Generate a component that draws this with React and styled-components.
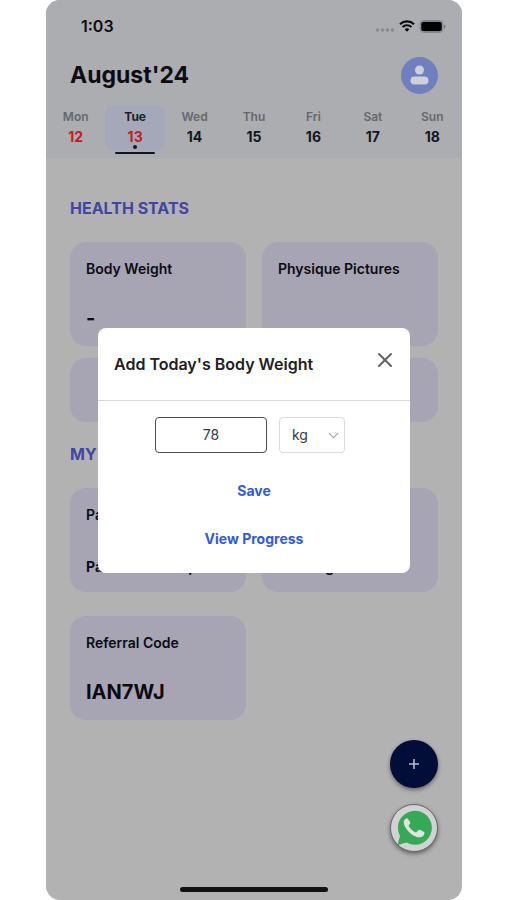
import React from "react";
import styled, { createGlobalStyle } from "styled-components";
import { X, ChevronDown } from "lucide-react";

const GlobalStyle = createGlobalStyle`
  *, *::before, *::after { box-sizing: border-box; }
  body { margin: 0; background: #fff; font-family: Inter, "Liberation Sans", sans-serif; color: #0b0b10; }
  h1, h2, h3, p { margin: 0; }
  button, input, select { font: inherit; }
`;

const Page = styled.div`
  min-height: 100vh;
  padding: 0 45px 0 46px;
  display: flex;
`;

const Phone = styled.div`
  position: relative;
  flex: 1;
  min-width: 0;
  display: flex;
  flex-direction: column;
  background: #b2b2b2;
  border-radius: 14px;
  overflow: hidden;
`;

const Header = styled.header`
  background: #abadb1;
  height: 158px;
`;

const StatusBar = styled.div`
  display: flex;
  align-items: center;
  justify-content: space-between;
  height: 52px;
  padding: 0 16px 0 35px;
`;

const Clock = styled.span`
  font-size: 16px;
  line-height: 20px;
  font-weight: 600;
`;

const StatusIcons = styled.div`
  display: flex;
  align-items: center;
  gap: 4px;
`;

const TitleRow = styled.div`
  display: flex;
  align-items: center;
  justify-content: space-between;
  height: 46px;
  padding: 0 24px;
`;

const Month = styled.h1`
  font-size: 23px;
  line-height: 32px;
  font-weight: 700;
`;

const Avatar = styled.button`
  width: 37px;
  height: 37px;
  padding: 0;
  border: 0;
  border-radius: 50%;
  background: #707fbe;
  svg { display: block; }
`;

const Week = styled.div`
  display: grid;
  grid-template-columns: repeat(7, 1fr);
  padding-top: 7px;
`;

const Day = styled.button`
  position: relative;
  height: 46px;
  padding: 2px 0 0;
  border: 0;
  border-radius: 8px;
  background: ${(p) => (p.$selected ? "#a5a8b8" : "transparent")};
  display: flex;
  flex-direction: column;
  align-items: center;
`;

const DayName = styled.span`
  font-size: 12px;
  line-height: 20px;
  font-weight: ${(p) => (p.$selected ? 700 : 600)};
  color: ${(p) => (p.$selected ? "#1d1e26" : "#66676c")};
`;

const DayNumber = styled.span`
  font-size: 14px;
  line-height: 20px;
  font-weight: 700;
  color: ${(p) => (p.$red ? "#bd2127" : "#15161b")};
`;

const TodayDot = styled.span`
  position: absolute;
  bottom: 2px;
  width: 4px;
  height: 4px;
  border-radius: 50%;
  background: #14151d;
`;

const Underline = styled.span`
  position: absolute;
  bottom: -3px;
  width: 40px;
  height: 2px;
  border-radius: 1px;
  background: #14151d;
`;

const Content = styled.main`
  flex: 1;
  padding: 38px 24px 180px;
`;

const SectionTitle = styled.h2`
  font-size: 16px;
  line-height: 24px;
  font-weight: 700;
  color: #4245a4;
`;

const Cards = styled.div`
  display: grid;
  grid-template-columns: 1fr 1fr;
  gap: ${(p) => p.$gap} 16px;
  margin: ${(p) => p.$margin};
`;

const Card = styled.section`
  height: ${(p) => (p.$short ? "64px" : "104px")};
  padding: 16px;
  border-radius: 16px;
  background: #a7a4b3;
  display: flex;
  flex-direction: column;
  justify-content: space-between;
`;

const CardTitle = styled.h3`
  font-size: 14px;
  line-height: 22px;
  font-weight: 600;
`;

const CardValue = styled.p`
  font-size: ${(p) => (p.$small ? "14px" : "20px")};
  line-height: ${(p) => (p.$small ? "18px" : "24px")};
  font-weight: 700;
`;

const Fabs = styled.div`
  position: absolute;
  right: 24px;
  bottom: 48px;
  display: flex;
  flex-direction: column;
  gap: 16px;
`;

const Fab = styled.button`
  width: 48px;
  height: 48px;
  padding: 0;
  display: grid;
  place-items: center;
  border-radius: 50%;
  border: ${(p) => (p.$light ? "1px solid #66666c" : "0")};
  background: ${(p) => (p.$light ? "#d2d2d4" : "#020d38")};
  box-shadow: 0 2px 4px rgba(0, 0, 0, 0.45);
`;

const HomeIndicator = styled.div`
  position: absolute;
  bottom: 8px;
  left: 50%;
  width: 148px;
  height: 5px;
  margin-left: -74px;
  border-radius: 3px;
  background: #111;
`;

const Overlay = styled.div`
  position: absolute;
  inset: 0;
  display: flex;
  align-items: center;
  justify-content: center;
`;

const Dialog = styled.form`
  width: 75%;
  background: #fff;
  border-radius: 8px;
`;

const DialogHeader = styled.div`
  display: flex;
  align-items: flex-start;
  justify-content: space-between;
  height: 73px;
  padding: 20px 13px 0 16px;
  border-bottom: 1px solid #d9d9dc;
`;

const DialogTitle = styled.h2`
  padding-top: 4px;
  font-size: 16px;
  line-height: 24px;
  font-weight: 600;
  color: #202024;
`;

const Close = styled.button`
  padding: 0;
  border: 0;
  background: none;
  color: #626266;
  svg { display: block; }
`;

const DialogBody = styled.div`
  display: flex;
  flex-direction: column;
  align-items: center;
  padding: 16px 16px 22px;
`;

const Fields = styled.div`
  display: flex;
  gap: 12px;
  padding-right: 8px;
  margin-bottom: 26px;
`;

const WeightInput = styled.input`
  width: 112px;
  height: 36px;
  border: 1px solid #4b4862;
  border-radius: 4px;
  background: #fff;
  text-align: center;
  font-size: 14px;
  color: #38383c;
  outline: none;
`;

const UnitBox = styled.div`
  position: relative;
  width: 66px;
  svg { position: absolute; right: 3px; top: 10px; pointer-events: none; color: #a5a5a8; }
`;

const UnitSelect = styled.select`
  appearance: none;
  width: 100%;
  height: 36px;
  padding: 0 12px;
  border: 1px solid #dadadd;
  border-radius: 4px;
  background: #fff;
  font-size: 14px;
  color: #38383c;
`;

const TextButton = styled.button`
  padding: 0;
  border: 0;
  background: none;
  font-size: 14px;
  line-height: 24px;
  font-weight: 700;
  color: #315bd8;
  & + & { margin-top: 24px; }
`;

const days = [
  ["Mon", 12], ["Tue", 13], ["Wed", 14], ["Thu", 15], ["Fri", 16], ["Sat", 17], ["Sun", 18],
];

function StatusGlyphs() {
  return (
    <StatusIcons aria-hidden="true">
      <svg width="20" height="14" viewBox="0 0 20 14" fill="#88898e">
        <circle cx="2.5" cy="11" r="1.7" />
        <circle cx="7.5" cy="11" r="1.7" />
        <circle cx="12.5" cy="11" r="1.7" />
        <circle cx="17.5" cy="11" r="1.7" />
      </svg>
      <svg width="16" height="12" viewBox="0 0 16 12" fill="none" stroke="#08080a" strokeWidth="2.2">
        <path d="M1 4.2a10.2 10.2 0 0 1 14 0M3.6 7a6.4 6.4 0 0 1 8.8 0" />
        <path d="M8 11.7 5.7 9.2a3.4 3.4 0 0 1 4.6 0z" fill="#08080a" stroke="none" />
      </svg>
      <svg width="27" height="13" viewBox="0 0 27 13">
        <rect x="1" y="0.5" width="23" height="12" rx="3.5" fill="none" stroke="#838489" />
        <rect x="2.2" y="1.7" width="20.6" height="9.6" rx="2.2" fill="#020203" />
        <path d="M25 4.5c2 .7 2 3.3 0 4z" fill="#77787d" />
      </svg>
    </StatusIcons>
  );
}

function WhatsAppIcon() {
  return (
    <svg width="36" height="36" viewBox="0 0 36 36" aria-hidden="true">
      <path d="M1.5 35 4 26A17 17 0 1 1 10.4 32.5z" fill="#36a956" />
      <path
        d="M12.2 9.2c-.5-.9-1.2-.9-1.9-.8-1.9.7-2.7 2.5-2.5 4.7.4 3.4 3.4 7.6 7.1 10.6 3.2 2.6 7.6 4.5 10.3 3.3 1.9-.8 3.2-2.2 3.2-4.1 0-.6-.2-.9-.8-1.2l-3.8-1.9c-.7-.3-1.1-.2-1.6.4l-1.5 1.8c-.4.4-.8.5-1.4.2-3-1.4-5.1-3.4-6.5-5.9-.3-.5-.2-.9.2-1.4l1.1-1.4c.3-.4.3-.8.1-1.3z"
        fill="#e0e3e0"
      />
    </svg>
  );
}

export default function App() {
  return (
    <Page>
      <GlobalStyle />
      <Phone>
        <Header>
          <StatusBar>
            <Clock>1:03</Clock>
            <StatusGlyphs />
          </StatusBar>
          <TitleRow>
            <Month>August'24</Month>
            <Avatar type="button" aria-label="Profile">
              <svg width="37" height="37" viewBox="0 0 37 37" fill="#cdd0d9">
                <circle cx="18.5" cy="13" r="4.5" />
                <rect x="9.5" y="19.5" width="18" height="8" rx="4" />
              </svg>
            </Avatar>
          </TitleRow>
          <Week>
            {days.map(([name, number]) => {
              const selected = number === 13;
              return (
                <Day key={name} type="button" $selected={selected} aria-pressed={selected}>
                  <DayName $selected={selected}>{name}</DayName>
                  <DayNumber $red={number < 14}>{number}</DayNumber>
                  {selected && <TodayDot />}
                  {selected && <Underline />}
                </Day>
              );
            })}
          </Week>
        </Header>

        <Content>
          <SectionTitle>HEALTH STATS</SectionTitle>
          <Cards $gap="12px" $margin="22px 0 20px">
            <Card>
              <CardTitle>Body Weight</CardTitle>
              <CardValue>-</CardValue>
            </Card>
            <Card>
              <CardTitle>Physique Pictures</CardTitle>
            </Card>
            <Card $short />
            <Card $short />
          </Cards>
          <SectionTitle>MY PLAN</SectionTitle>
          <Cards $gap="24px" $margin="22px 0 0">
            <Card>
              <CardTitle>Pack</CardTitle>
              <CardValue $small>Paid until 13 Sep</CardValue>
            </Card>
            <Card>
              <CardTitle>Plan</CardTitle>
              <CardValue $small>Training</CardValue>
            </Card>
            <Card>
              <CardTitle>Referral Code</CardTitle>
              <CardValue>IAN7WJ</CardValue>
            </Card>
          </Cards>
        </Content>

        <Fabs>
          <Fab type="button" aria-label="Add">
            <svg width="12" height="12" viewBox="0 0 12 12" stroke="#b9bcc8" strokeWidth="1.6">
              <path d="M6 1v10M1 6h10" />
            </svg>
          </Fab>
          <Fab type="button" $light aria-label="WhatsApp">
            <WhatsAppIcon />
          </Fab>
        </Fabs>
        <HomeIndicator />

        <Overlay>
          <Dialog role="dialog" aria-labelledby="dialog-title" onSubmit={(e) => e.preventDefault()}>
            <DialogHeader>
              <DialogTitle id="dialog-title">Add Today's Body Weight</DialogTitle>
              <Close type="button" aria-label="Close">
                <X size={24} strokeWidth={2} />
              </Close>
            </DialogHeader>
            <DialogBody>
              <Fields>
                <WeightInput aria-label="Body weight" inputMode="decimal" defaultValue="78" />
                <UnitBox>
                  <UnitSelect aria-label="Unit" defaultValue="kg">
                    <option value="kg">kg</option>
                    <option value="lb">lb</option>
                  </UnitSelect>
                  <ChevronDown size={17} strokeWidth={1.8} />
                </UnitBox>
              </Fields>
              <TextButton type="submit">Save</TextButton>
              <TextButton type="button">View Progress</TextButton>
            </DialogBody>
          </Dialog>
        </Overlay>
      </Phone>
    </Page>
  );
}
